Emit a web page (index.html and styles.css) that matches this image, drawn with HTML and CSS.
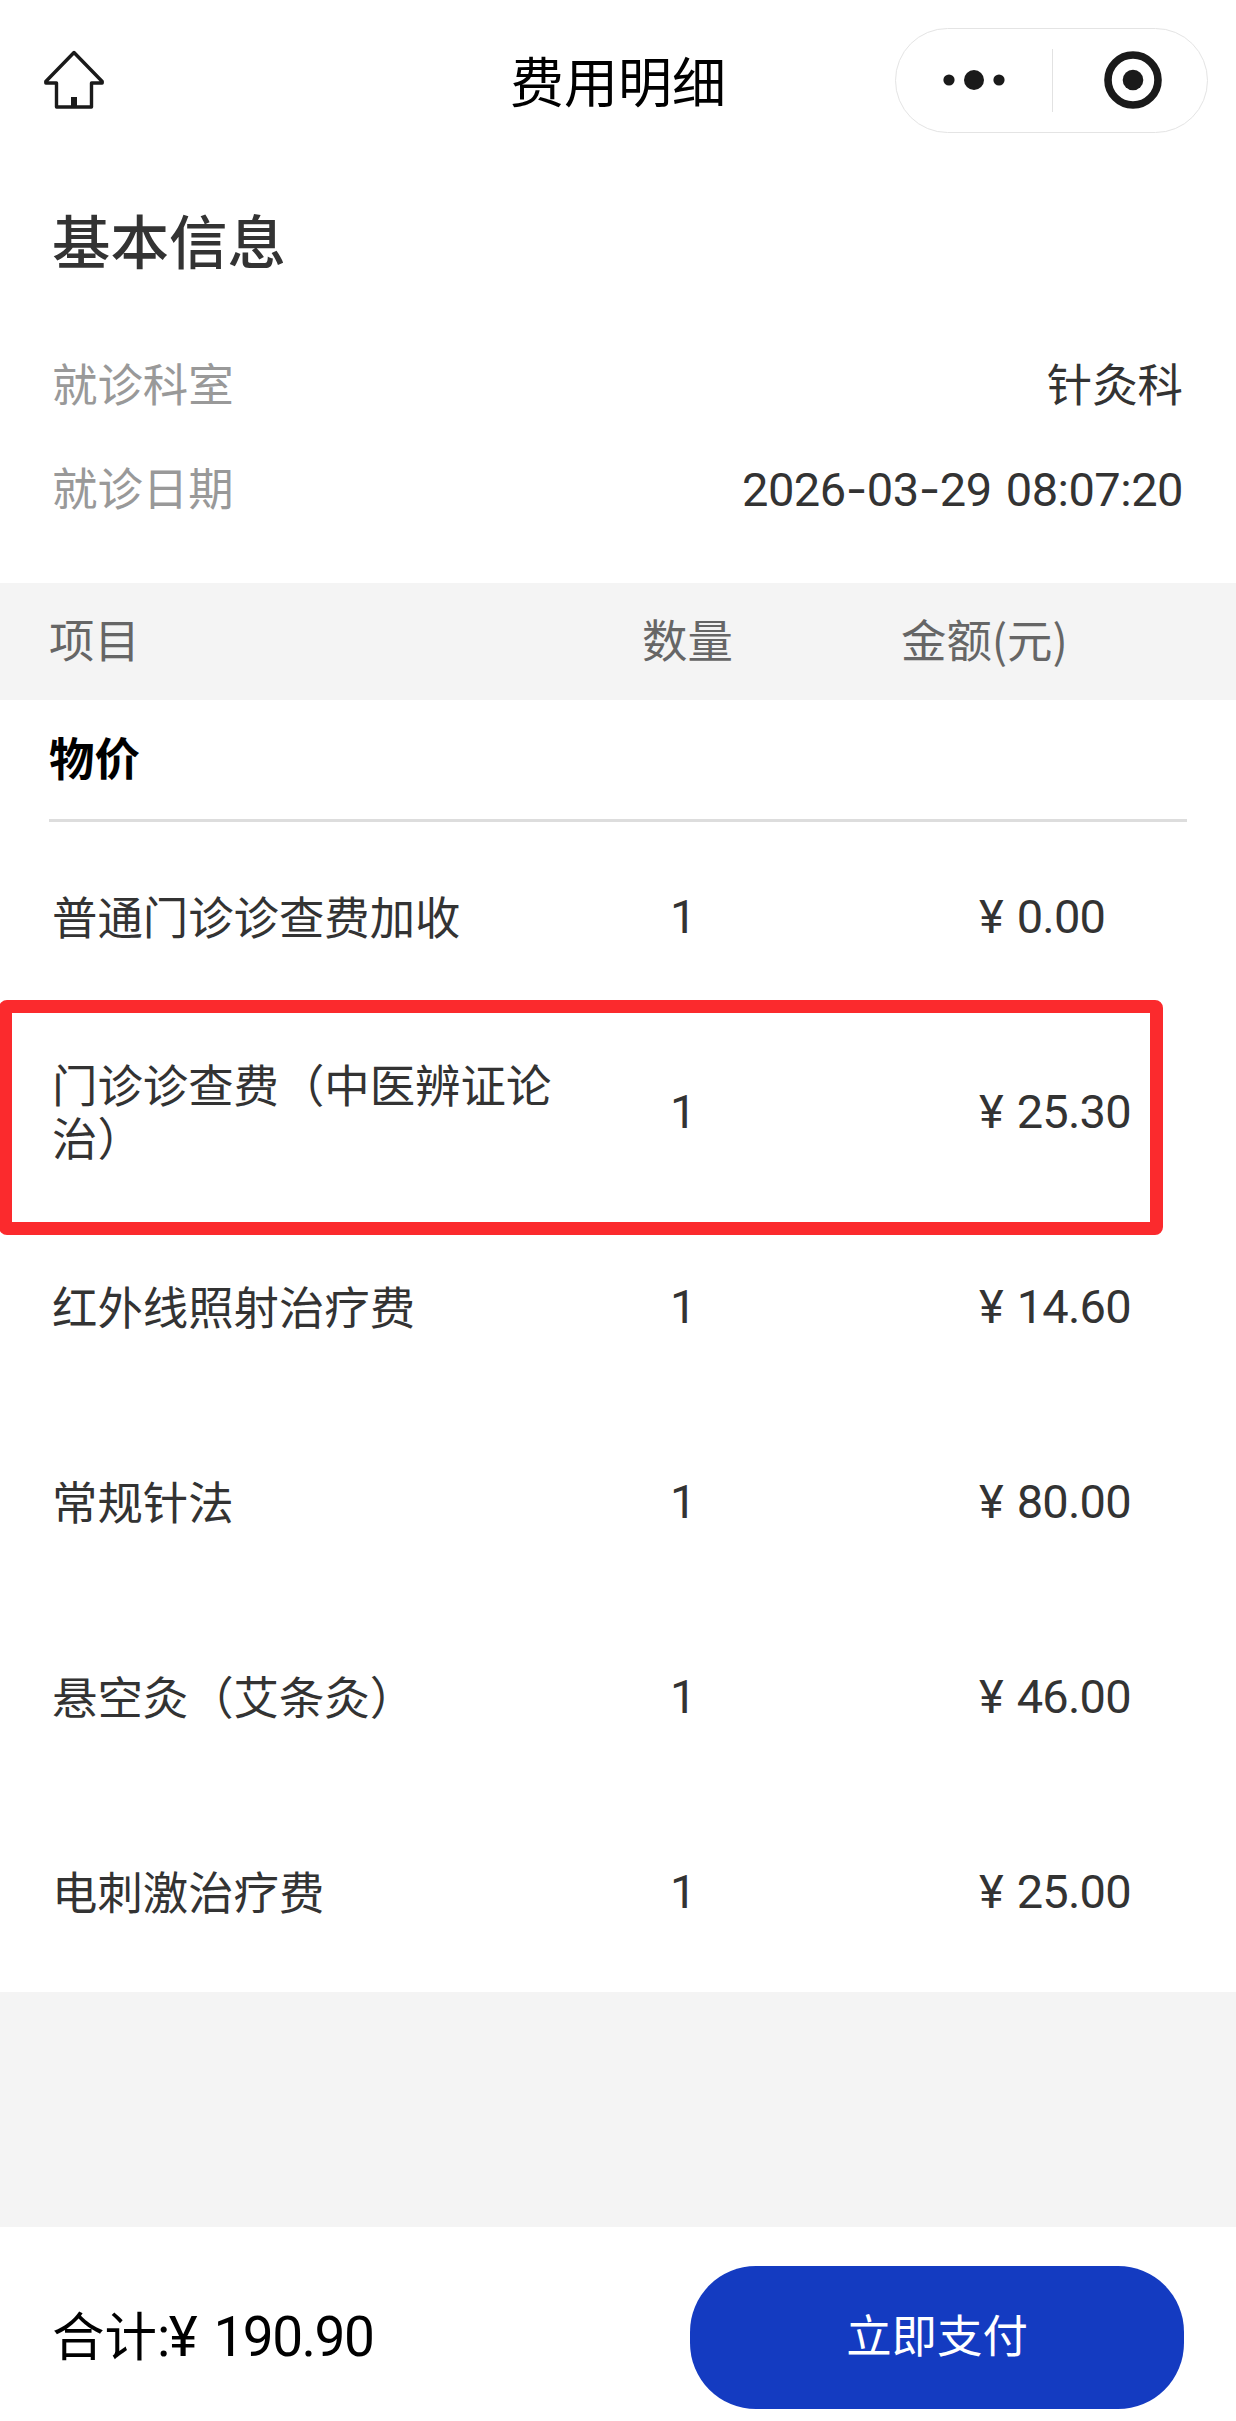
FILE: index.html
```html
<!DOCTYPE html>
<html lang="zh-CN">
<head>
<meta charset="utf-8">
<title>费用明细</title>
<link rel="stylesheet" href="styles.css">
</head>
<body>
<header class="navbar">
  <svg class="home" viewBox="0 0 62 60" width="62" height="60" fill="none" stroke="#1a1a1a" stroke-width="3.4" stroke-linejoin="round">
    <path d="M31 2.500L2.800 31.500V33H13.500V57H48.500V33H59.200V31.500Z"/>
    <path d="M31 57V47" stroke-width="6"/>
  </svg>
  <h1 class="title">费用明细</h1>
  <div class="capsule">
    <svg class="more" viewBox="0 0 62 24" width="62" height="24" fill="#1a1a1a"><circle cx="6" cy="12" r="5.600"/><circle cx="31" cy="12" r="10"/><circle cx="56" cy="12" r="5.600"/></svg>
    <span class="divider"></span>
    <svg class="close" viewBox="0 0 58 58" width="58" height="58"><circle cx="29" cy="29" r="25" fill="none" stroke="#1a1a1a" stroke-width="7.600"/><circle cx="29" cy="29" r="10.300" fill="#1a1a1a"/></svg>
  </div>
</header>
<section class="info">
  <h2 class="info-title">基本信息</h2>
  <div class="info-row"><span class="label">就诊科室</span><span>针灸科</span></div>
  <div class="info-row"><span class="label">就诊日期</span><span class="num date">2026<span class="dash">-</span>03<span class="dash">-</span>29 08:07:20</span></div>
</section>
<section class="table">
  <div class="table-head"><span>项目</span><span>数量</span><span>金额(元)</span></div>
  <h3 class="group">物价</h3>
  <div class="row"><span>普通门诊诊查费加收</span><span class="num">1</span><span class="num">¥ 0.00</span></div>
  <div class="row marked"><span>门诊诊查费（中医辨证论治）</span><span class="num">1</span><span class="num">¥ 25.30</span></div>
  <div class="row"><span>红外线照射治疗费</span><span class="num">1</span><span class="num">¥ 14.60</span></div>
  <div class="row"><span>常规针法</span><span class="num">1</span><span class="num">¥ 80.00</span></div>
  <div class="row"><span>悬空灸（艾条灸）</span><span class="num">1</span><span class="num">¥ 46.00</span></div>
  <div class="row"><span>电刺激治疗费</span><span class="num">1</span><span class="num">¥ 25.00</span></div>
</section>
<footer class="footer">
  <div class="total">合计<span class="num total-num">:¥ 190.90</span></div>
  <button class="pay">立即支付</button>
</footer>
</body>
</html>
```
FILE: styles.css
```css
*, *::after { box-sizing: border-box; }
body {
  margin: 0;
  height: 2421px;
  display: flex;
  flex-direction: column;
  background: #f4f4f4;
  color: #333;
  font: 400 45.4px/53px "Noto Sans CJK SC", sans-serif;
}
h1, h2, h3 { margin: 0; font-weight: 400; }
.num {
  font-family: Roboto, "Noto Sans CJK SC", sans-serif;
  font-size: 47px;
  letter-spacing: -0.8px;
  word-spacing: 3px;
}

.navbar {
  height: 160px;
  padding: 0 28px 0 43px;
  display: grid;
  grid-template-columns: 313px 1fr 313px;
  align-items: center;
  background: #fff;
}
.title {
  padding-right: 15px;
  text-align: center;
  color: #000;
  font-size: 54px;
  line-height: 78px;
}
.capsule {
  height: 105px;
  display: flex;
  align-items: center;
  border: 1.5px solid #e4e4e4;
  border-radius: 53px;
}
.more { margin-left: 47px; }
.divider { width: 1px; height: 63px; margin: 0 51px 0 47px; background: #e2e2e2; }

.info { height: 423px; padding: 39px 53px 0 52px; background: #fff; }
.info-title { height: 131px; font-size: 58.5px; line-height: 79px; font-weight: 500; }
.info-row { height: 104px; display: flex; justify-content: space-between; line-height: 104px; }
.info-row .label { color: #999; }
.info-row .date { padding-top: 3px; letter-spacing: -0.5px; }
.dash { font-family: Inter, sans-serif; }

.table { height: 1409px; background: #fff; }
.table-head {
  height: 117px;
  padding-left: 49px;
  display: grid;
  grid-template-columns: 593px 259px 1fr;
  line-height: 111px;
  background: #f4f4f4;
  color: #666;
}
.group {
  height: 122px;
  margin: 0 49px;
  border-bottom: 3px solid #ddd;
  line-height: 113px;
  font-size: 45.4px;
  font-weight: 700;
  color: #000;
}
.row {
  position: relative;
  height: 195px;
  padding: 0 0 9px 52px;
  display: grid;
  grid-template-columns: 510px 417px 1fr;
  align-items: center;
}
.row .num { padding-top: 3px; }
.row .num:nth-child(2) { padding-left: 108px; }
.marked::after {
  content: "";
  position: absolute;
  left: -1px;
  top: -17px;
  width: 1164px;
  height: 235px;
  border: 13px solid #fb2a2d;
  border-radius: 8px;
}

.footer {
  height: 194px;
  margin-top: 235px;
  padding: 0 52px 0 52px;
  display: flex;
  align-items: center;
  justify-content: space-between;
  background: #fff;
}
.total { color: #000; font-size: 52.5px; line-height: 80px; padding-top: 21px; }
.total-num { font-size: 55px; letter-spacing: -1.5px; word-spacing: 5px; }
.pay {
  width: 494px;
  height: 143px;
  margin-top: 27px;
  padding: 0 0 9px;
  border: 0;
  border-radius: 66px;
  background: #143bc1;
  color: #fff;
  font: inherit;
}
```
